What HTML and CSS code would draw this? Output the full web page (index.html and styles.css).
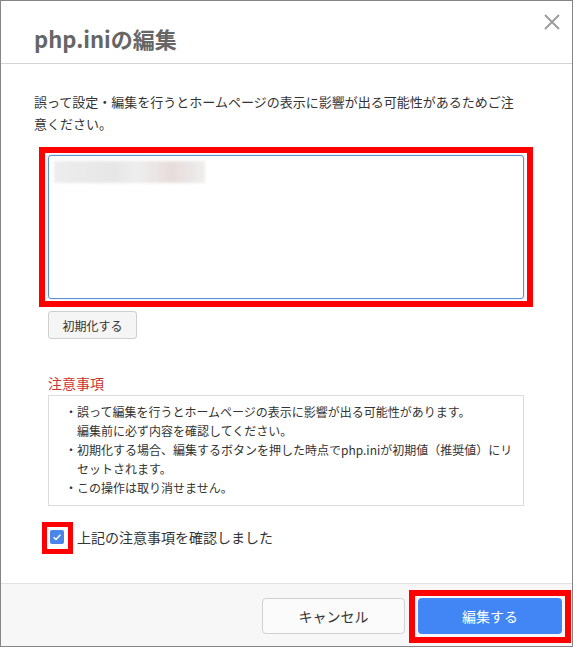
FILE: index.html
```html
<!DOCTYPE html>
<html lang="ja">
<head>
  <meta charset="UTF-8" />
  <meta name="viewport" content="width=device-width, initial-scale=1.0" />
  <title>php.iniの編集</title>
  <link rel="stylesheet" href="styles.css">
</head>
<body>
  <div class="dialog">
    <header class="dialog-header">
      <h1>php.iniの編集</h1>
      <button class="close-btn" aria-label="閉じる">
        <svg width="16" height="16" viewBox="0 0 16 16">
          <path d="M1 1 L15 15 M15 1 L1 15" stroke="#9a9a9a" stroke-width="1.8" fill="none" />
        </svg>
      </button>
    </header>

    <main class="dialog-body">
      <p class="intro">誤って設定・編集を行うとホームページの表示に影響が出る可能性があるためご注意ください。</p>

      <div class="form-area">
        <div class="editor marked">
          <div class="blurred"></div>
        </div>
        <button class="reset-btn">初期化する</button>

        <h2 class="notes-title">注意事項</h2>
        <ul class="notes">
          <li>・誤って編集を行うとホームページの表示に影響が出る可能性があります。<br>編集前に必ず内容を確認してください。</li>
          <li>・初期化する場合、編集するボタンを押した時点でphp.iniが初期値（推奨値）にリ<br>セットされます。</li>
          <li>・この操作は取り消せません。</li>
        </ul>

        <label class="confirm">
          <span class="check marked">
            <svg width="14" height="14" viewBox="0 0 14 14">
              <path d="M3.6 7.3 L6 9.5 L10.4 4.7" stroke="#fff" stroke-width="1.4" fill="none" />
            </svg>
          </span>
          上記の注意事項を確認しました
        </label>
      </div>
    </main>

    <footer class="dialog-footer">
      <button class="cancel-btn">キャンセル</button>
      <button class="submit-btn marked">編集する</button>
    </footer>
  </div>
</body>
</html>
```

FILE: styles.css
```css
* {
  box-sizing: border-box;
}
body {
  margin: 0;
  font-family: "Noto Sans CJK JP", "Noto Sans", sans-serif;
  color: #333;
  background: #fff;
}
button {
  font-family: inherit;
  cursor: pointer;
}
.dialog {
  position: relative;
  width: 573px;
  height: 647px;
  border: 1px solid #858585;
  display: flex;
  flex-direction: column;
  background: #fff;
}
.dialog-header {
  height: 63px;
  padding: 21px 0 0 33px;
  border-bottom: 1px solid #d4d4d4;
}
.dialog-header h1 {
  margin: 0;
  font-size: 22px;
  line-height: 32px;
  font-weight: bold;
  color: #666;
}
.close-btn {
  position: absolute;
  top: 13px;
  right: 12px;
  padding: 0;
  border: none;
  background: none;
  line-height: 0;
}
.dialog-body {
  flex: 1;
  padding: 27px 48px 0 33px;
}
.intro {
  margin: 0;
  font-size: 13px;
  line-height: 22px;
}
.form-area {
  margin-left: 14px;
}
/* red annotation frames drawn over the marked element */
.marked {
  position: relative;
}
.marked::after {
  content: "";
  position: absolute;
  inset: -9px;
  border: 6px solid #f00;
  pointer-events: none;
}
.editor {
  margin-top: 20px;
  height: 144px;
  border: 1px solid #5d8fd6;
  border-radius: 3px;
  box-shadow: 0 0 2px rgba(93, 143, 214, 0.5);
  padding: 5px 0 0 5px;
}
.editor.marked::after {
  inset: -9px -10px -9px -10px;
}
.blurred {
  width: 151px;
  height: 22px;
  background: linear-gradient(to right, #ededed, #e6e6e6 40%, #eeeeee 55%, #e8dcdc 78%, #eeeeee);
  filter: blur(1.5px);
}
.reset-btn {
  margin-top: 12px;
  width: 89px;
  height: 28px;
  padding: 0;
  font-size: 12px;
  color: #333;
  background: #f5f5f5;
  border: 1px solid #cfcfcf;
  border-radius: 3px;
}
.notes-title {
  margin: 34px 0 0;
  font-size: 14px;
  line-height: 20px;
  font-weight: normal;
  color: #cc3333;
}
.notes {
  margin: 2px 0 0;
  padding: 6px 8px 8px 16px;
  list-style: none;
  border: 1px solid #dcdcdc;
  font-size: 12px;
  line-height: 19px;
}
.notes li {
  padding-left: 12px;
  text-indent: -12px;
}
.confirm {
  margin-top: 21px;
  display: flex;
  align-items: center;
  gap: 13px;
  font-size: 14px;
  line-height: 20px;
}
.check {
  margin-left: 2px;
  width: 14px;
  height: 14px;
  border-radius: 2px;
  background: #4a86e8;
  line-height: 0;
}
.check.marked::after {
  inset: -8px -9px -10px -8px;
  border-width: 5px;
}
.dialog-footer {
  border-top: 1px solid #e2e2e2;
  background: #f7f7f7;
  padding: 14px 10px 12px;
  display: flex;
  justify-content: flex-end;
  gap: 13px;
}
.cancel-btn,
.submit-btn {
  height: 36px;
  font-size: 14px;
  border-radius: 4px;
}
.cancel-btn {
  width: 143px;
  color: #333;
  background: #fbfbfb;
  border: 1px solid #d2d2d2;
}
.submit-btn {
  width: 144px;
  color: #fff;
  background: #4285f4;
  border: none;
}
.submit-btn.marked::after {
  inset: -8px -9px -9px -9px;
}
```
